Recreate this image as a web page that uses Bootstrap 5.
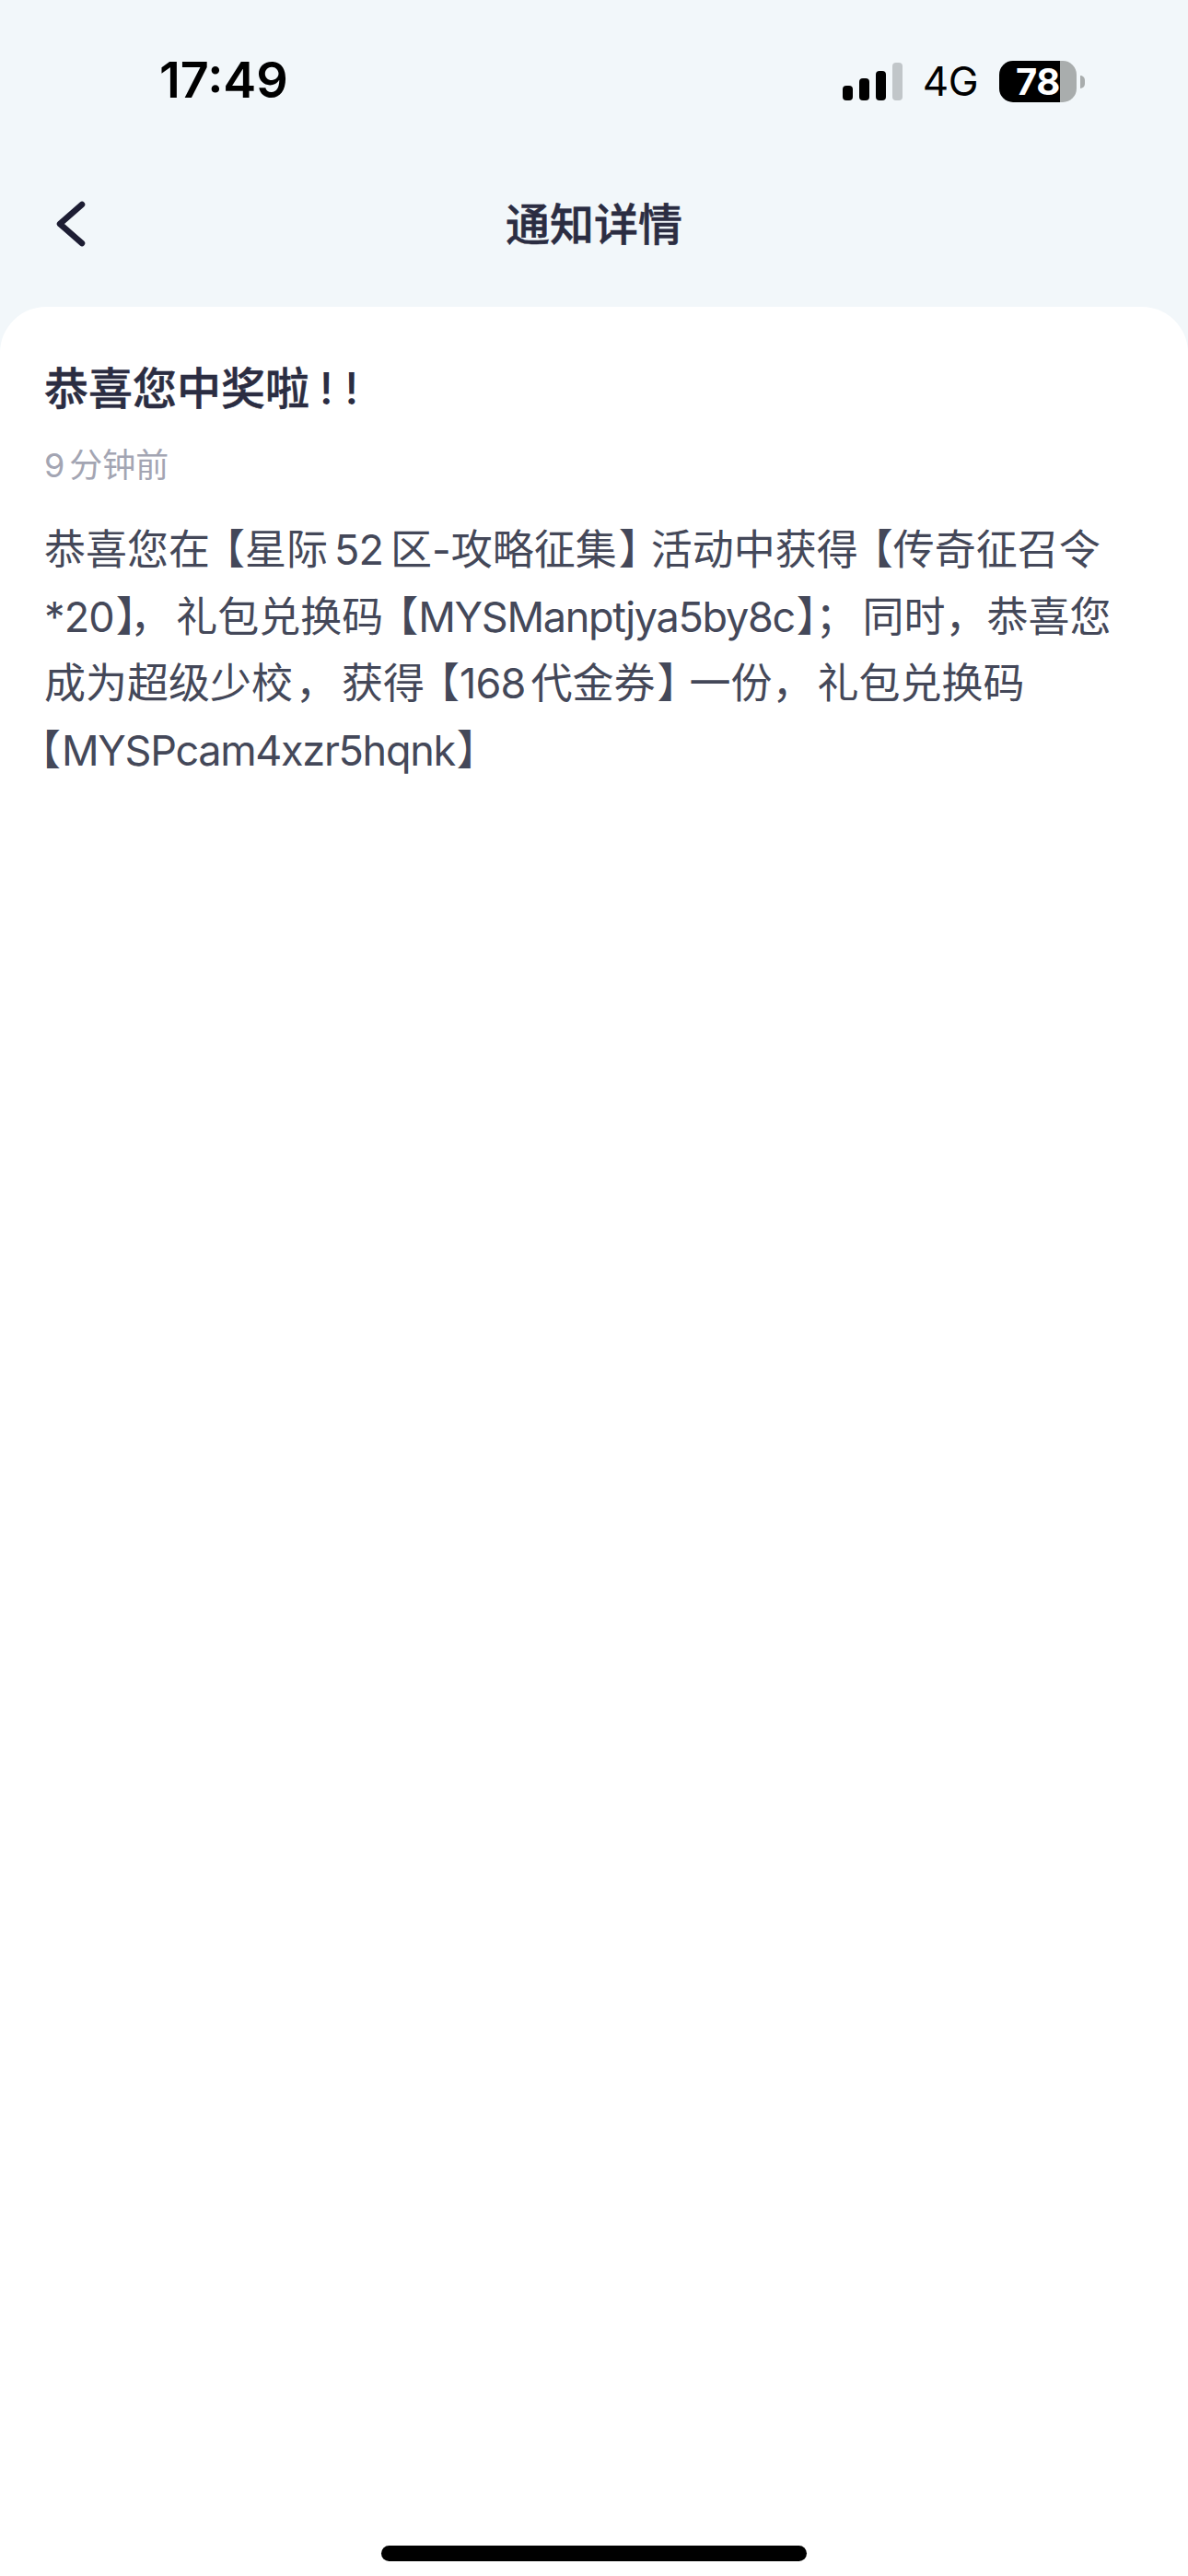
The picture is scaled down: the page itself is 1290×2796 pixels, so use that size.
<!doctype html>
<html lang="zh-CN">
<head>
<meta charset="utf-8">
<title>通知详情</title>
<link href="https://cdn.jsdelivr.net/npm/bootstrap@5.3.0/dist/css/bootstrap.min.css" rel="stylesheet">
<style>
body{margin:0;background:#f2f7fa;font-family:Inter,"Noto Sans CJK SC",sans-serif;}
.screen-wrap{height:2796px;width:1290px;}
.status-row{height:174px;padding:66px 112px 0 173px;}
.clock-text{font-size:54px;line-height:42px;font-weight:600;color:#000;}
.sig-bars{gap:7px;height:41px;margin-right:22px;}
.sig-bars i{display:block;width:11px;background:#000;border-radius:4px;}
.sig-bars i:nth-child(1){height:16px}.sig-bars i:nth-child(2){height:24px}.sig-bars i:nth-child(3){height:32px}.sig-bars i:nth-child(4){height:41px;background:#c1c6c9}
.net-text{font-size:44px;line-height:41px;color:#000;font-weight:400;margin-right:23px;letter-spacing:-.5px;}
.batt-shell{width:84px;height:45px;border-radius:15px;background:linear-gradient(90deg,#000 0 66px,#a9adad 66px);color:#fff;font-size:40px;line-height:45px;font-weight:700;padding-left:18px;letter-spacing:-.5px;}
.batt-nub{width:5px;height:14px;background:#a9adad;border-radius:0 7px 7px 0;margin-left:4px;}
.top-nav{height:159px;padding-top:31px;}
.nav-back{left:58px;top:44px;width:36px;height:50px;}
.nav-title{font-size:48px;line-height:70px;font-weight:500;-webkit-text-stroke:.5px #2b2d42;color:#2b2d42;font-family:"Noto Sans CJK SC",sans-serif;}
.sheet-body{background:#fff;border-radius:50px 50px 0 0;height:2463px;padding:56px 48px 0;}
.msg-head{font-size:48px;line-height:66px;font-weight:500;-webkit-text-stroke:.5px #2b2d42;color:#2b2d42;margin:0;}
.bang-mark{font-weight:500;margin-left:11px;-webkit-text-stroke:0;}
.msg-time{font-size:36px;line-height:52px;color:#a3a5b3;margin:24px 0 0;}
.msg-time span{margin-right:5px;}
.msg-text{font-size:45px;line-height:72.5px;color:#444859;margin:30px 0 0;white-space:nowrap;}
.lat{letter-spacing:-.9px;}
.code-txt{letter-spacing:-1.3px;}
.lat-pad{letter-spacing:-.9px;margin:0 8px 0 7px;}
.gap-after{margin-right:6px;}
.comma-gap{margin-left:3px;margin-right:5px;}
.semi-gap{margin-left:8px;margin-right:6px;}
.comma-wide{margin-right:4px;}
.tuck{letter-spacing:-7px;}
.brk-close{letter-spacing:-10px;margin-left:2px;}
.brk-start{letter-spacing:1px;margin-left:-27px;}
.home-bar{left:414px;top:2763px;width:462px;height:17px;}
</style>
</head>
<body>
<div class="screen-wrap position-relative overflow-hidden">
  <div class="status-row d-flex justify-content-between align-items-start">
    <div class="clock-text">17:49</div>
    <div class="d-flex align-items-center">
      <div class="sig-bars d-flex align-items-end"><i></i><i></i><i></i><i></i></div>
      <div class="net-text">4G</div>
      <div class="batt-shell">78</div>
      <div class="batt-nub"></div>
    </div>
  </div>
  <div class="top-nav position-relative d-flex justify-content-center align-items-start">
    <svg class="nav-back position-absolute" viewBox="0 0 36 50" fill="none"><path d="M31 4 7 25l24 21" stroke="#1d1d33" stroke-width="6.5" stroke-linecap="round" stroke-linejoin="round"/></svg>
    <div class="nav-title">通知详情</div>
  </div>
  <div class="sheet-body">
    <h1 class="msg-head">恭喜您中奖啦<span class="bang-mark">! !</span></h1>
    <p class="msg-time"><span>9</span>分钟前</p>
    <p class="msg-text">恭喜您<span class="tuck">在</span>【星际<span class="lat-pad">52</span>区-攻略征集<span class="brk-close">】</span>活动中获<span class="tuck">得</span>【传奇征召令<br><span class="lat">*20</span><span class="brk-close">】</span><span class="comma-gap">，</span>礼包兑换<span class="tuck">码</span>【<span class="code-txt">MYSManptjya5by8c</span><span class="brk-close">】</span><span class="semi-gap">；</span>同时，恭喜您<br>成为超级少校<span class="comma-gap">，</span>获<span class="tuck">得</span>【<span class="lat gap-after">168</span>代金券<span class="brk-close">】</span>一份<span class="comma-wide">，</span>礼包兑换码<br><span class="brk-start">【</span><span class="code-txt">MYSPcam4xzr5hqnk</span><span class="brk-close">】</span></p>
  </div>
  <div class="home-bar position-absolute bg-black rounded-pill"></div>
</div>
<script src="https://cdn.jsdelivr.net/npm/bootstrap@5.3.0/dist/js/bootstrap.bundle.min.js"></script>
</body>
</html>
